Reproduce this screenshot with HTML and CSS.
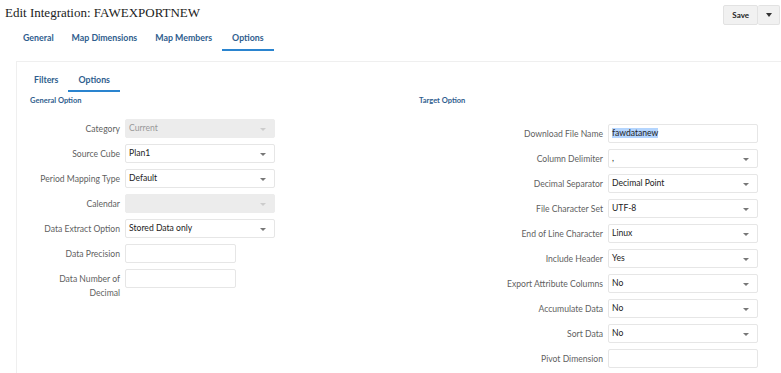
FILE: index.html
```html
<!DOCTYPE html>
<html lang="en">
<head>
    <meta charset="UTF-8">
    <title>Edit Integration: FAWEXPORTNEW</title>
    <link rel="stylesheet" href="styles.css">
</head>
<body>

<div class="header">
    <h1>Edit Integration: FAWEXPORTNEW</h1>
    <div class="btn-group">
        <button class="btn">Save</button>
        <button class="btn btn-menu"><span class="caret-dark"></span></button>
    </div>
</div>

<div class="tabs">
    <a class="tab">General</a>
    <a class="tab">Map Dimensions</a>
    <a class="tab">Map Members</a>
    <a class="tab active">Options</a>
</div>

<div class="panel">
    <div class="subtabs">
        <a class="tab">Filters</a>
        <a class="tab active">Options</a>
    </div>

    <div class="columns">
        <div class="col-left">
            <h3>General Option</h3>
            <div class="form">
                <label>Category</label>
                <div class="select disabled">Current<span class="caret"></span></div>
                <label>Source Cube</label>
                <div class="select">Plan1<span class="caret"></span></div>
                <label>Period Mapping Type</label>
                <div class="select">Default<span class="caret"></span></div>
                <label>Calendar</label>
                <div class="select disabled"><span class="caret"></span></div>
                <label>Data Extract Option</label>
                <div class="select">Stored Data only<span class="caret"></span></div>
                <label>Data Precision</label>
                <div class="input short"></div>
                <label>Data Number of Decimal</label>
                <div class="input short"></div>
            </div>
        </div>
        <div class="col-right">
            <h3>Target Option</h3>
            <div class="form form-right">
                <label>Download File Name</label>
                <div class="input"><span class="selected">fawdatanew</span></div>
                <label>Column Delimiter</label>
                <div class="select">,<span class="caret"></span></div>
                <label>Decimal Separator</label>
                <div class="select">Decimal Point<span class="caret"></span></div>
                <label>File Character Set</label>
                <div class="select">UTF-8<span class="caret"></span></div>
                <label>End of Line Character</label>
                <div class="select">Linux<span class="caret"></span></div>
                <label>Include Header</label>
                <div class="select">Yes<span class="caret"></span></div>
                <label>Export Attribute Columns</label>
                <div class="select">No<span class="caret"></span></div>
                <label>Accumulate Data</label>
                <div class="select">No<span class="caret"></span></div>
                <label>Sort Data</label>
                <div class="select">No<span class="caret"></span></div>
                <label>Pivot Dimension</label>
                <div class="input"></div>
            </div>
        </div>
    </div>
</div>

</body>
</html>
```

FILE: styles.css
```css
body {
    margin: 0;
    font-family: Lato, "Open Sans", sans-serif;
    font-size: 8.6px;
    color: #333;
    background-color: #fff;
    overflow: hidden;
}
.header {
    display: flex;
    justify-content: space-between;
    align-items: flex-start;
    padding: 3px 1px 0 5px;
    height: 25px;
}
h1 {
    margin: 0;
    font-family: "Liberation Serif", serif;
    font-weight: normal;
    font-size: 13px;
    color: #222;
    line-height: 20px;
}
.btn-group {
    display: flex;
    margin-top: 2px;
}
.btn {
    height: 20px;
    padding: 0 8px;
    border: 1px solid #e2e2e2;
    background-color: #f1f1f1;
    border-radius: 2px;
    font-family: Lato, sans-serif;
    font-weight: bold;
    font-size: 8px;
    color: #222;
}
.btn-menu {
    width: 22px;
    padding: 0;
    border-left: none;
    display: flex;
    align-items: center;
    justify-content: center;
}
.caret-dark {
    border-left: 3.5px solid transparent;
    border-right: 3.5px solid transparent;
    border-top: 4px solid #333;
}
.tabs {
    display: flex;
    margin-left: 14px;
}
.tab {
    display: block;
    font-weight: bold;
    font-size: 8.8px;
    line-height: 12px;
    color: #2f5e8e;
    border-bottom: 2px solid transparent;
}
.tab.active {
    border-bottom-color: #2a84cf;
}
.tabs .tab {
    padding: 4px 9px 5px;
}
.tabs .tab.active {
    padding: 4px 10px 5px;
    margin-left: 1px;
}
.panel {
    margin: 10px 0 0 16px;
    border: 1px solid #efefef;
    border-right: none;
    height: 330px;
}
.subtabs {
    display: flex;
    margin: 9px 0 0 7px;
}
.subtabs .tab {
    padding: 3px 10px 4px;
}
.columns {
    display: grid;
    grid-template-columns: 389px 1fr;
    padding-left: 13px;
}
h3 {
    margin: 4px 0 0;
    font-size: 7.5px;
    font-weight: bold;
    color: #2f5e8e;
    line-height: 10px;
}
.form {
    display: grid;
    grid-template-columns: 90px 150px;
    column-gap: 5px;
    row-gap: 6px;
    margin-top: 13px;
}
.form-right {
    grid-template-columns: 184px 150px;
    margin-top: 18px;
}
label {
    text-align: right;
    color: #5f5f5f;
    line-height: 14px;
    padding-top: 3px;
}
.select, .input {
    position: relative;
    height: 19px;
    box-sizing: border-box;
    border: 1px solid #e6e6e6;
    border-radius: 2px;
    padding: 0 3px;
    line-height: 17px;
    color: #222;
    font-size: 8.6px;
}
.select.disabled {
    background-color: #ececec;
    border-color: #ececec;
    color: #999;
}
.input.short {
    width: 111px;
}
.caret {
    position: absolute;
    right: 8px;
    top: 8px;
    border-left: 3px solid transparent;
    border-right: 3px solid transparent;
    border-top: 3px solid #777;
}
.disabled .caret {
    border-top-color: #ccc;
}
.selected {
    background-color: #b4d5fe;
}
```
